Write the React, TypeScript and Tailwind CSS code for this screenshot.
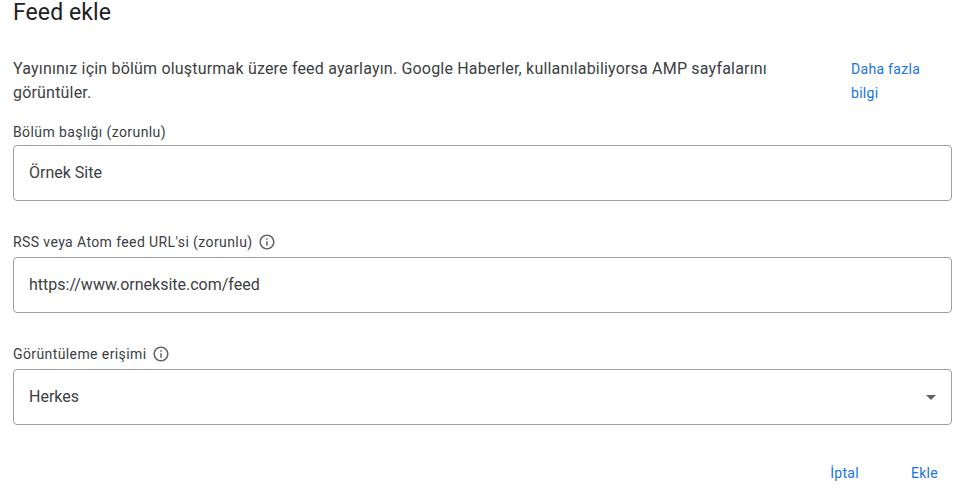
import React from "react";

function Info() {
  return (
    <svg width="18" height="18" viewBox="0 0 24 24" fill="#5f6368" className="shrink-0">
      <path d="M11 7h2v2h-2zm0 4h2v6h-2zm1-9C6.48 2 2 6.48 2 12s4.48 10 10 10 10-4.48 10-10S17.52 2 12 2zm0 18c-4.41 0-8-3.59-8-8s3.59-8 8-8 8 3.59 8 8-3.59 8-8 8z" />
    </svg>
  );
}

function Field({ label, value, info, select, mb, gap }: { label: string; value: string; info?: boolean; select?: boolean; mb: string; gap: string }) {
  return (
    <div className={mb}>
      <div className="flex items-center gap-[5px] h-[20px] text-[14px] text-[#3c4043] tracking-[0.4px]">
        <span>{label}</span>
        {info && <Info />}
      </div>
      <div className={`${gap} h-[56px] border border-[#9aa0a6] rounded-[4px] flex items-center justify-between pl-[15px] pr-[15px] text-[16px] text-[#3c4043]`}>
        <span>{value}</span>
        {select && <div className="w-0 h-0 border-l-[5px] border-r-[5px] border-t-[5px] border-l-transparent border-r-transparent border-t-[#5f6368]" />}
      </div>
    </div>
  );
}

export default function App() {
  return (
    <div className="w-[960px] h-[490px] overflow-hidden bg-white pl-[13px] pr-[8px] font-['Roboto',sans-serif]">
      <h1 className="text-[23px] leading-[26px] text-[#202124] h-[26px] mb-[31px] tracking-[0.1px]">Feed ekle</h1>
      <div className="flex h-[65px]">
        <p className="w-[790px] text-[16px] leading-[24px] text-[#3c4043] tracking-[0.19px]">
          Yayınınız için bölüm oluşturmak üzere feed ayarlayın. Google Haberler, kullanılabiliyorsa AMP sayfalarını görüntüler.
        </p>
        <a className="ml-[48px] w-[80px] text-[14px] leading-[24px] text-[#1a73e8] tracking-[0.3px]">Daha fazla bilgi</a>
      </div>
      <Field label="Bölüm başlığı (zorunlu)" value="Örnek Site" mb="mb-[31px]" gap="mt-[3px]" />
      <Field label="RSS veya Atom feed URL'si (zorunlu)" value="https://www.orneksite.com/feed" info mb="mb-[31px]" gap="mt-[5px]" />
      <Field label="Görüntüleme erişimi" value="Herkes" info select mb="mb-[38px]" gap="mt-[5px]" />
      <div className="flex justify-end gap-[52px] pr-[14px] text-[14px] text-[#1a73e8] leading-[20px] tracking-[0.3px]">
        <span>İptal</span>
        <span>Ekle</span>
      </div>
    </div>
  );
}
